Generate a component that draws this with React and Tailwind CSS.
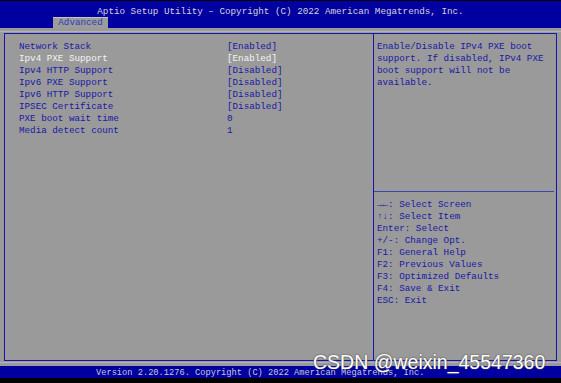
import React from "react";

const ITEMS = [
  { label: "Network Stack", value: "[Enabled]" },
  { label: "Ipv4 PXE Support", value: "[Enabled]", active: true },
  { label: "Ipv4 HTTP Support", value: "[Disabled]" },
  { label: "Ipv6 PXE Support", value: "[Disabled]" },
  { label: "Ipv6 HTTP Support", value: "[Disabled]" },
  { label: "IPSEC Certificate", value: "[Disabled]" },
  { label: "PXE boot wait time", value: "0" },
  { label: "Media detect count", value: "1" },
];

const HELP = [
  "Enable/Disable IPv4 PXE boot",
  "support. If disabled, IPv4 PXE",
  "boot support will not be",
  "available.",
];

const KEYS = [
  "→←: Select Screen",
  "↑↓: Select Item",
  "Enter: Select",
  "+/-: Change Opt.",
  "F1: General Help",
  "F2: Previous Values",
  "F3: Optimized Defaults",
  "F4: Save & Exit",
  "ESC: Exit",
];

export default function App() {
  return (
    <div className="relative w-[561px] h-[383px] overflow-hidden bg-[#9a9a9a] flex flex-col font-['Liberation_Mono',monospace] text-[9.25px] leading-[12px]">
      <div className="h-[1px] bg-black" />

      {/* header */}
      <div className="h-[27px] bg-[#0000a0] flex flex-col">
        <div className="h-[16px] flex items-center justify-center pt-[5px] text-[#d4d4dc]">
          Aptio Setup Utility – Copyright (C) 2022 American Megatrends, Inc.
        </div>
        <div className="flex-1 flex items-end pl-[53px]">
          <div className="w-[55px] h-[11px] bg-[#9c9c9c] border-t border-[#c4c4c4] flex items-center justify-center text-[#2e3cb0] leading-[10px]">
            Advanced
          </div>
        </div>
      </div>

      <div className="h-[5px] flex flex-col justify-end">
        <div className="h-[1px] bg-[#b4b4b4] mb-[1px]" />
      </div>

      {/* main panel */}
      <div className="mx-[4px] h-[328px] border border-[#1414b0] flex">
        <div className="w-[368px] pt-[7px] pl-[14px] text-[#1818a8]">
          {ITEMS.map((it) => (
            <div key={it.label} className="grid grid-cols-[208px_1fr] h-[12px]">
              <span className={it.active ? "text-[#f4f4f4]" : ""}>{it.label}</span>
              <span className={it.active ? "text-[#f4f4f4]" : ""}>{it.value}</span>
            </div>
          ))}
        </div>

        <div className="flex-1 border-l border-[#1414b0] flex flex-col text-[#1818a8]">
          <div className="h-[157px] pt-[7px] pl-[3px]">
            {HELP.map((l) => (
              <div key={l} className="h-[12px] whitespace-pre">{l}</div>
            ))}
          </div>
          <div className="h-[1px] bg-[#3c44b4] mr-[2px]" />
          <div className="pt-[7px] pl-[3px]">
            {KEYS.map((k) => (
              <div key={k} className="h-[12px] whitespace-pre">{k}</div>
            ))}
          </div>
        </div>
      </div>

      <div className="h-[5px] flex flex-col justify-start">
        <div className="h-[1px] bg-[#b4b4b4] mt-[1px]" />
      </div>

      {/* footer */}
      <div className="h-[12px] bg-[#0000a0] flex items-center pl-[96px] pt-[1px] text-[8.7px] text-[#c8c8d4]">
        Version 2.20.1276. Copyright (C) 2022 American Megatrends, Inc.
      </div>
      <div className="h-[5px] bg-black" />

      <div className="absolute left-[313px] top-[350px] font-['Liberation_Sans',sans-serif] text-[19.5px] leading-[24px] text-white [text-shadow:0_0_2px_#555,0_0_1px_#555]">
        CSDN @weixin_45547360
      </div>
    </div>
  );
}
